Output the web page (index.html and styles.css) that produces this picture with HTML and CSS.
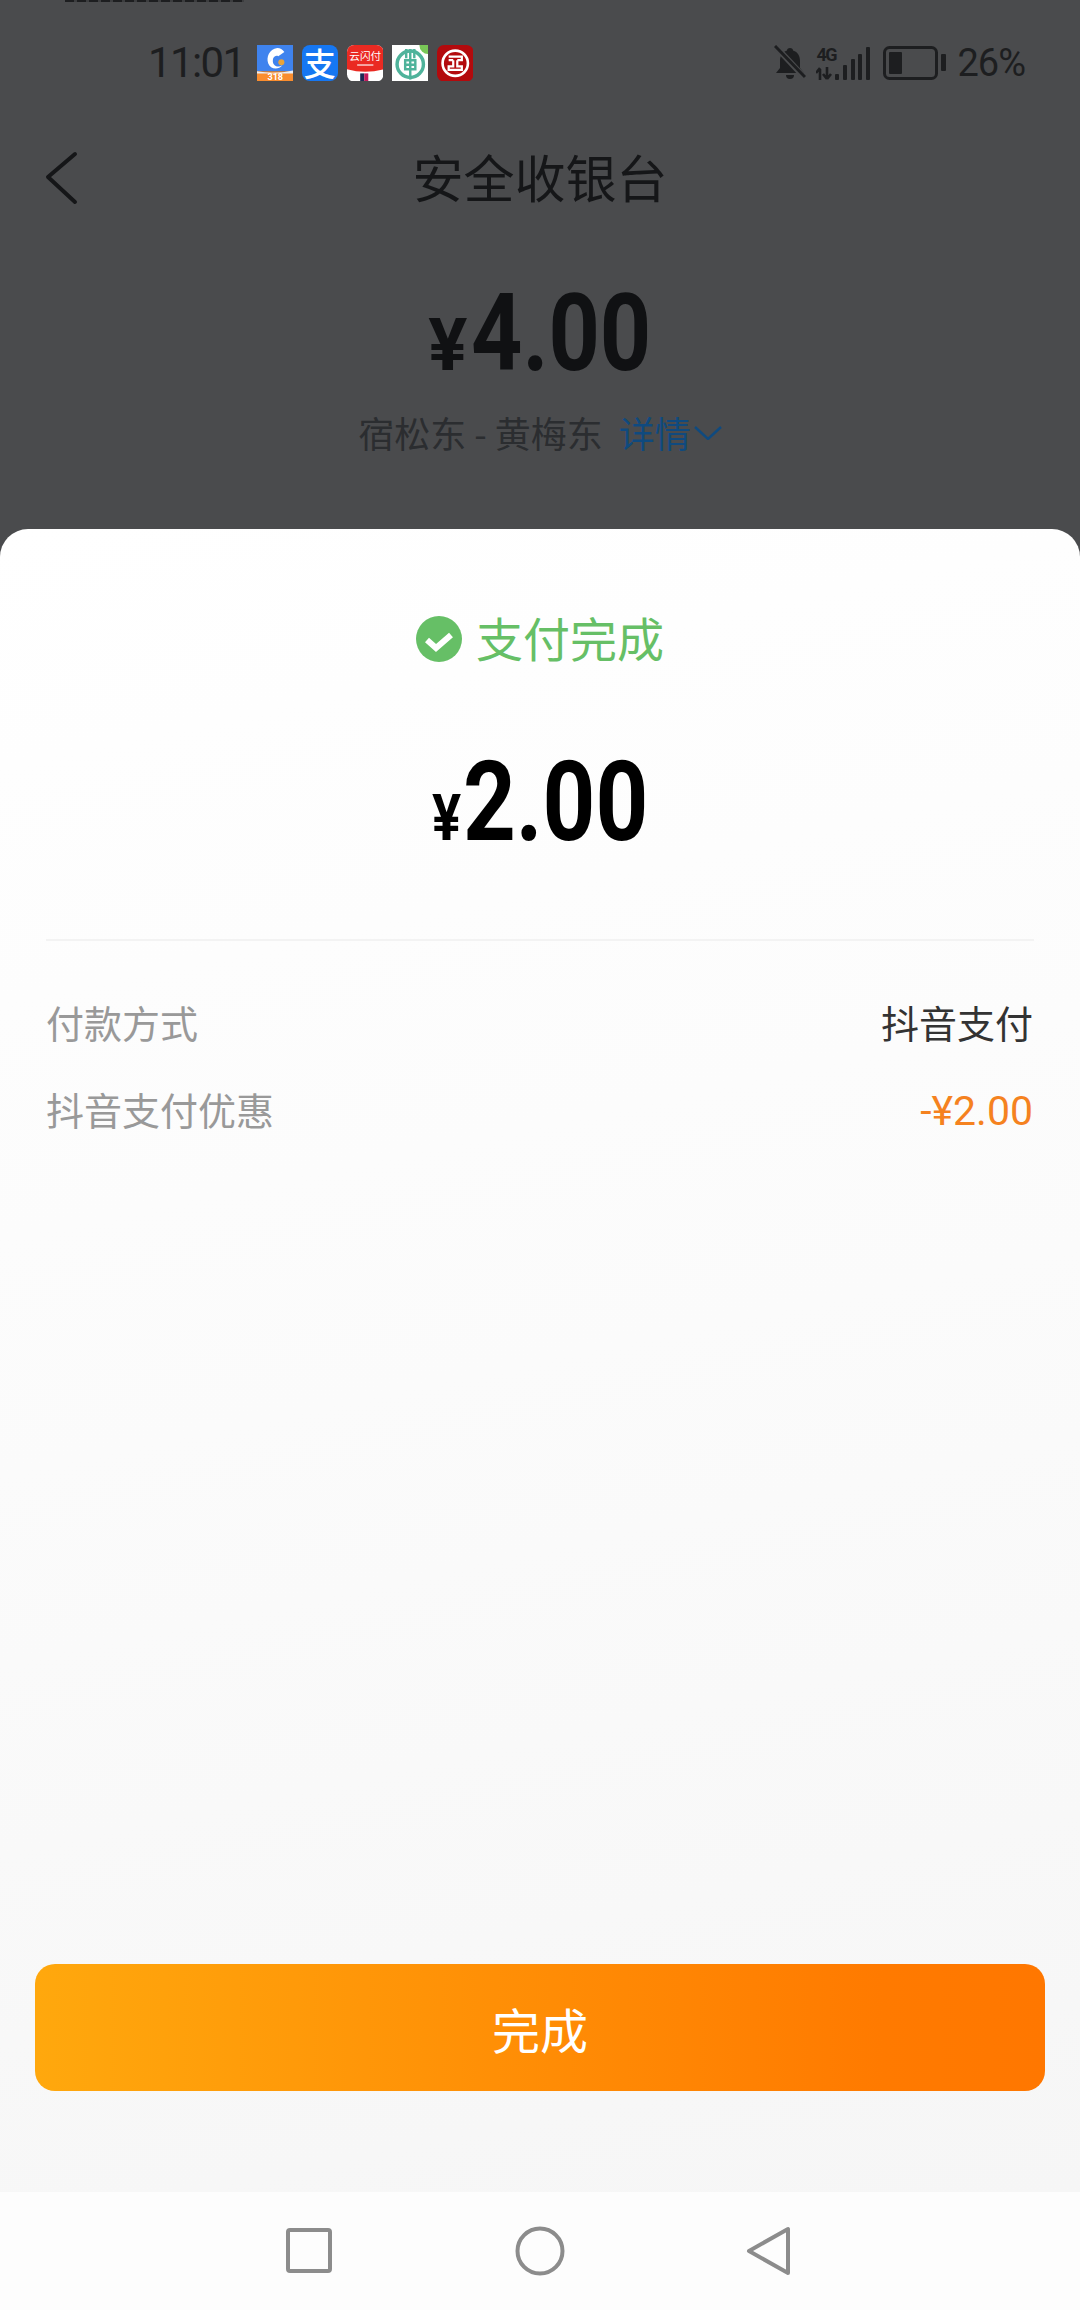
FILE: index.html
```html
<!DOCTYPE html>
<html lang="zh-CN">
<head>
    <meta charset="UTF-8">
    <meta name="viewport" content="width=device-width, initial-scale=1.0">
    <title>安全收银台</title>
    <link rel="stylesheet" href="styles.css">
</head>
<body>
    <div class="cashier">
        <div class="top-strip"></div>
        <div class="status-bar">
            <span class="time">11:01</span>
            <div class="app-icons">
                <svg class="app-icon" viewBox="0 0 36 36">
                    <rect width="36" height="26" fill="#3f83ee"/>
                    <rect y="26" width="36" height="10" fill="#f98d2f"/>
                    <path d="M0 26 Q18 29 36 25 V28 H0Z" fill="#e9eef5"/>
                    <path d="M20 3 C12 4 9 12 11 18 C13 24 21 25 25 20 C20 23 14 20 16 13 C17 11 19 10 21 11 L27 7 C25 4 23 3 20 3Z" fill="#fff"/>
                    <circle cx="24" cy="17" r="3" fill="#e9a33a"/>
                    <text x="18" y="34.5" class="tiny-label">318</text>
                </svg>
                <div class="app-icon alipay">支</div>
                <svg class="app-icon" viewBox="0 0 36 36">
                    <rect width="36" height="36" rx="7" fill="#fff"/>
                    <path d="M0 7 a7 7 0 0 1 7-7 H29 a7 7 0 0 1 7 7 V24 Q18 29 0 24Z" fill="#ea2a22"/>
                    <text x="18" y="15" class="flash-label">云闪付</text>
                    <rect x="10" y="19" width="16" height="1.5" fill="#f9c9c6"/>
                    <rect x="13" y="28" width="4" height="8" fill="#1c2a55"/>
                    <rect x="17" y="28" width="4" height="8" fill="#c2185b"/>
                </svg>
                <svg class="app-icon" viewBox="0 0 36 36">
                    <rect width="36" height="36" fill="#fff"/>
                    <circle cx="18" cy="19" r="13" fill="none" stroke="#4fb39b" stroke-width="3.4"/>
                    <path d="M18 4 V34 M14 4 V13 M22 4 V13 M13 15 H23 V24 H13Z M13 19.5 H23" fill="none" stroke="#4fb39b" stroke-width="2.4"/>
                    <path d="M27 0 H36 V9 A9 9 0 0 1 27 0Z" fill="#79c757"/>
                </svg>
                <svg class="app-icon" viewBox="0 0 36 36">
                    <rect width="36" height="36" rx="7" fill="#b30a0d"/>
                    <circle cx="18" cy="18" r="12.5" fill="none" stroke="#fff" stroke-width="2.6"/>
                    <path d="M11.5 11.5 H24.5 V15 H20 M16 15 H11.5 M16 15 V21 H11.5 V24.5 H24.5 V21 H20 V15" fill="none" stroke="#fff" stroke-width="2.2"/>
                </svg>
            </div>
            <div class="status-right">
                <!-- muted bell -->
                <svg class="bell" viewBox="0 0 32 36">
                    <path d="M16 3 C18 3 19 4 19 5.5 C24 7 26 11 26 16 V23 L30 28 H2 L6 23 V16 C6 11 8 7 13 5.5 C13 4 14 3 16 3Z M12 30 H20 A4 4 0 0 1 12 30Z" fill="#1d1e20"/>
                    <path d="M3 3 L31 33" stroke="#4a4b4d" stroke-width="6"/>
                    <path d="M1 1 L31 32" stroke="#1d1e20" stroke-width="3"/>
                </svg>
                <div class="network">
                    <span class="network-label">4G</span>
                    <svg class="arrows" viewBox="0 0 16 13">
                        <path d="M4 13 V2 M0 6 L4 1 M11 0 V11 M11 12 L15 7 M11 12 L7 7" fill="none" stroke="#1d1e20" stroke-width="2.6"/>
                    </svg>
                </div>
                <svg class="bars" viewBox="0 0 35 33">
                    <rect x="0" y="27" width="4" height="6" rx="1" fill="#1d1e20"/>
                    <rect x="8" y="18" width="4" height="15" rx="1" fill="#1d1e20"/>
                    <rect x="16" y="12" width="4" height="21" rx="1" fill="#1d1e20"/>
                    <rect x="23" y="7" width="4" height="26" rx="1" fill="#1d1e20"/>
                    <rect x="31" y="0" width="4" height="33" rx="1" fill="#1d1e20"/>
                </svg>
                <svg class="battery" viewBox="0 0 63 34">
                    <rect x="1.5" y="1.5" width="52" height="31" rx="5" fill="none" stroke="#1d1e20" stroke-width="3"/>
                    <rect x="6" y="6" width="13" height="22" rx="1" fill="#1d1e20"/>
                    <rect x="58" y="8" width="5" height="17" rx="1" fill="#1d1e20"/>
                </svg>
                <span class="battery-text">26%</span>
            </div>
        </div>
        <div class="nav-header">
            <svg class="back" viewBox="0 0 34 54">
                <polyline points="31,3 4,26 31,51" fill="none" stroke="#151618" stroke-width="4" stroke-linecap="round" stroke-linejoin="round"/>
            </svg>
            <h1 class="title">安全收银台</h1>
        </div>
        <div class="amount amount-due">
            <span class="yen">¥</span><span class="digits">4.00</span>
        </div>
        <div class="trip">
            <span>宿松东 - 黄梅东</span>
            <span class="detail-link">详情</span>
            <svg class="detail-arrow" viewBox="0 0 28 14">
                <polyline points="1,1 14,13 27,1" fill="none" stroke="#0f4a7f" stroke-width="2.4"/>
            </svg>
        </div>
    </div>

    <section class="sheet">
        <div class="result">
            <svg class="check" viewBox="0 0 46 46">
                <circle cx="23" cy="23" r="23" fill="#66bf66"/>
                <polyline points="11,24 20,32 35,19" fill="none" stroke="#fff" stroke-width="6"/>
            </svg>
            <span class="result-text">支付完成</span>
        </div>
        <div class="amount amount-paid">
            <span class="yen">¥</span><span class="digits">2.00</span>
        </div>
        <div class="divider"></div>
        <div class="row">
            <span class="row-label">付款方式</span>
            <span class="row-value">抖音支付</span>
        </div>
        <div class="row">
            <span class="row-label">抖音支付优惠</span>
            <span class="row-value discount">-¥2.00</span>
        </div>
        <button class="done" type="button">完成</button>
    </section>

    <nav class="system-nav">
        <svg class="nav-icon nav-recent" viewBox="0 0 50 50">
            <rect x="4" y="4" width="42" height="41" rx="2" fill="none" stroke="#8c8c8c" stroke-width="4"/>
        </svg>
        <svg class="nav-icon" viewBox="0 0 50 50">
            <circle cx="25" cy="25" r="22.5" fill="none" stroke="#8c8c8c" stroke-width="4"/>
        </svg>
        <svg class="nav-icon" viewBox="0 0 50 50">
            <polygon points="45,3 45,47 6,25" fill="none" stroke="#8c8c8c" stroke-width="4" stroke-linejoin="round"/>
        </svg>
    </nav>
</body>
</html>
```

FILE: styles.css
```css
* {
    box-sizing: border-box;
}

body {
    font-family: "Noto Sans CJK SC", Roboto, sans-serif;
    width: 1080px;
    height: 2310px;
    margin: 0;
    display: flex;
    flex-direction: column;
    background-color: #4a4b4d;
    color: #151618;
    overflow: hidden;
}

.cashier {
    height: 529px;
    flex-shrink: 0;
}

.top-strip {
    width: 179px;
    height: 2px;
    margin-left: 65px;
    background: repeating-linear-gradient(90deg, #1d1e20 0 9px, #3c3d3f 9px 12px);
}

/* status bar */
.status-bar {
    height: 122px;
    display: flex;
    align-items: center;
    padding-left: 148px;
    color: #1d1e20;
}

.time {
    flex-shrink: 0;
    font-family: Roboto, sans-serif;
    font-size: 42px;
    line-height: 50px;
    letter-spacing: -1.6px;
    margin-right: 12px;
}

.app-icons {
    display: flex;
    gap: 8.5px;
}

.app-icon {
    width: 36.5px;
    height: 36.5px;
    display: block;
}

.alipay {
    background-color: #1677f2;
    border-radius: 8px;
    color: #fff;
    font-size: 32px;
    font-weight: 500;
    line-height: 35px;
    text-align: center;
}

.tiny-label {
    font-family: Roboto, sans-serif;
    font-size: 9px;
    font-weight: 700;
    fill: #fff;
    text-anchor: middle;
}

.flash-label {
    font-family: "Noto Sans CJK SC", sans-serif;
    font-size: 10.5px;
    fill: #fff;
    text-anchor: middle;
}

.status-right {
    display: flex;
    align-items: center;
    margin-left: auto;
    padding-right: 55px;
}

.bell {
    width: 32px;
    height: 36px;
    margin-right: 10px;
}

.network {
    width: 19px;
    height: 33px;
    display: flex;
    flex-direction: column;
    justify-content: space-between;
}

.network-label {
    font-family: Roboto, sans-serif;
    font-size: 18px;
    font-weight: 700;
    letter-spacing: -1.5px;
    line-height: 15px;
}

.arrows {
    width: 16px;
    height: 13px;
}

.bars {
    width: 35px;
    height: 33px;
}

.battery {
    width: 63px;
    height: 34px;
    margin-left: 13px;
}

.battery-text {
    font-family: Roboto, sans-serif;
    font-size: 38px;
    letter-spacing: -1px;
    margin-left: 11px;
}

/* header */
.nav-header {
    height: 108px;
    display: flex;
    align-items: center;
    justify-content: center;
    position: relative;
}

.back {
    position: absolute;
    left: 44px;
    top: 27px;
    width: 34px;
    height: 54px;
}

.title {
    margin: 0 0 4px;
    font-size: 51px;
    font-weight: 400;
    line-height: 60px;
}

/* amounts: the digits are squeezed sideways to get the tall, narrow numerals */
.amount {
    height: 100px;
    display: flex;
    align-items: baseline;
    justify-content: center;
    font-family: Roboto, sans-serif;
    font-weight: 700;
    line-height: 100px;
}

.amount .digits {
    display: inline-block;
    transform: scaleX(0.83);
    transform-origin: left center;
}

.amount .yen {
    display: inline-block;
    transform-origin: left center;
}

.amount-due {
    margin-top: 51px;
    color: #101113;
}

.amount-due .yen {
    font-size: 73px;
    margin-right: 4px;
}

.amount-due .digits {
    font-size: 108px;
    margin-right: -37px;
}

.amount-paid {
    margin-top: 88px;
    color: #000;
}

.amount-paid .yen {
    font-size: 64px;
    transform: scaleX(0.85);
    margin-right: -3px;
}

.amount-paid .digits {
    font-size: 111px;
    margin-right: -38px;
}

.trip {
    height: 50px;
    margin-top: 24px;
    display: flex;
    align-items: center;
    justify-content: center;
    font-size: 36px;
    color: #2b2d30;
}

.detail-link {
    margin-left: 16px;
    color: #0f4a7f;
}

.detail-arrow {
    width: 28px;
    height: 14px;
    margin-left: 3px;
    margin-top: 2px;
}

/* bottom sheet */
.sheet {
    flex: 1;
    display: flex;
    flex-direction: column;
    background: linear-gradient(168deg, #fff 0%, #fbfbfb 50%, #f6f6f6 100%);
    border-radius: 28px 28px 0 0;
}

.result {
    height: 50px;
    margin-top: 85px;
    display: flex;
    align-items: center;
    justify-content: center;
    gap: 14px;
    font-size: 47px;
    color: #66bf66;
}

.result-text {
    margin-bottom: 6px;
}

.check {
    width: 46px;
    height: 46px;
}

.divider {
    height: 2px;
    margin: 87px 46px 0;
    background-color: #f3f3f3;
}

.row {
    height: 50px;
    margin: 37px 47px 0 46px;
    display: flex;
    align-items: center;
    justify-content: space-between;
    font-size: 38px;
}

.divider + .row {
    margin-top: 55px;
}

.row-label {
    color: #999;
}

.row-value {
    color: #333;
}

.discount {
    font-family: Roboto, sans-serif;
    font-size: 41px;
    margin-top: 6px;
    color: #f5821f;
}

.done {
    height: 127px;
    margin: auto 35px 101px;
    border: none;
    border-radius: 20px;
    background: linear-gradient(90deg, #ffa80d 0%, #ff7a00 84%, #ff7700 100%);
    color: #fff;
    font-family: inherit;
    font-size: 48px;
}

/* system navigation */
.system-nav {
    height: 118px;
    flex-shrink: 0;
    display: flex;
    align-items: center;
    justify-content: center;
    gap: 178px;
    background-color: #fdfdfd;
}

.nav-icon {
    width: 50px;
    height: 50px;
}

.nav-recent {
    margin-left: -3px;
    margin-right: 3px;
}
```
